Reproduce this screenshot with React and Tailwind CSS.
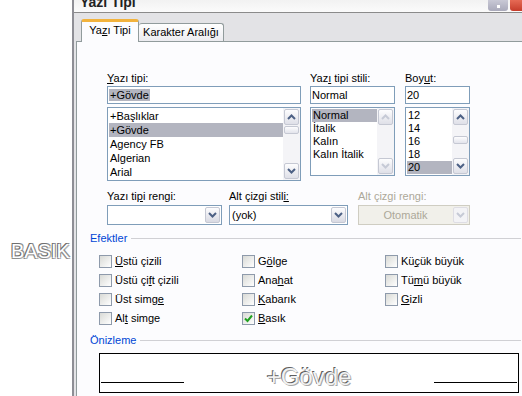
import React from 'react';

const FONTS = [
  '+Başlıklar',
  '+Gövde',
  'Agency FB',
  'Algerian',
  'Arial',
];
const STYLES = ['Normal', 'İtalik', 'Kalın', 'Kalın İtalik'];
const SIZES = ['12', '14', '16', '18', '20'];

function U({ children }) {
  return <span className="underline underline-offset-[1px]">{children}</span>;
}

function Arrow({ dir, disabled }) {
  return (
    <svg width="9" height="6" viewBox="0 0 9 6">
      <path
        d={dir === 'up' ? 'M1 5 L4.5 1.5 L8 5' : 'M1 1 L4.5 4.5 L8 1'}
        fill="none"
        stroke={disabled ? '#c6cad6' : '#4d6185'}
        strokeWidth="2"
      />
    </svg>
  );
}

function SbButton({ dir, disabled }) {
  return (
    <div className="h-[16px] shrink-0 flex items-center justify-center rounded-[2px] border border-[#c5c8d3] bg-linear-to-b from-[#fdfdfe] to-[#dfe0e8]">
      <Arrow dir={dir} disabled={disabled} />
    </div>
  );
}

function ScrollBar({ thumb, disabled }) {
  return (
    <div className="w-[17px] shrink-0 flex flex-col p-px bg-[#f4f4f7]">
      <SbButton dir="up" disabled={disabled} />
      <div className="flex-1">
        {thumb !== undefined && (
          <div
            className="h-[8px] rounded-[2px] border border-[#c5c8d3] bg-linear-to-b from-[#fdfdfe] to-[#e3e4ec]"
            style={{ marginTop: thumb }}
          />
        )}
      </div>
      <SbButton dir="down" disabled={disabled} />
    </div>
  );
}

function ListBox({ items, selected, rowH, height, thumb, disabled }) {
  return (
    <div
      className="mt-[3px] flex border border-[#7f9db9] bg-white"
      style={{ height }}
    >
      <div className="flex-1 pt-px pl-px">
        {items.map((it) => (
          <div
            key={it}
            className={it === selected ? 'pl-px bg-[#b3b5c0] whitespace-nowrap' : 'pl-px whitespace-nowrap'}
            style={{ height: rowH, lineHeight: rowH + 'px' }}
          >
            {it}
          </div>
        ))}
      </div>
      <ScrollBar thumb={thumb} disabled={disabled} />
    </div>
  );
}

function Field({ children }) {
  return (
    <div className="mt-px h-[18px] border border-[#7f9db9] bg-white pl-px leading-[16px] whitespace-nowrap">
      {children}
    </div>
  );
}

function Combo({ text, disabled }) {
  return (
    <div
      className={
        disabled
          ? 'mt-[2px] h-[20px] flex border border-[#cfcdc2] bg-[#f1f0ea]'
          : 'mt-[2px] h-[20px] flex border border-[#7f9db9] bg-white'
      }
    >
      <div
        className={
          disabled
            ? 'flex-1 text-center text-[#aca899] leading-[18px]'
            : 'flex-1 pl-[2px] leading-[18px]'
        }
      >
        {text}
      </div>
      <div
        className={
          disabled
            ? 'w-[15px] m-px flex items-center justify-center rounded-[2px] border border-[#dedde4] bg-[#f3f3f6]'
            : 'w-[15px] m-px flex items-center justify-center rounded-[2px] border border-[#c5c8d3] bg-linear-to-b from-[#fdfdfe] to-[#d9dae3]'
        }
      >
        <Arrow dir="down" disabled={disabled} />
      </div>
    </div>
  );
}

function GroupLabel({ children }) {
  return (
    <div className="flex items-center pl-[13px] h-[13px]">
      <span className="text-[#0046d5]">{children}</span>
      <div className="flex-1 h-px ml-[4px] mr-px bg-[#d0d0d4]" />
    </div>
  );
}

function Check({ checked, children }) {
  return (
    <div className="flex items-center h-[19px]">
      <div className="w-[13px] h-[13px] shrink-0 flex items-center justify-center border border-[#8e9aab] bg-linear-to-br from-[#d9dad6] to-white">
        {checked && (
          <svg width="9" height="9" viewBox="0 0 9 9">
            <path d="M1 4.5 L3.5 7 L8 1.5" fill="none" stroke="#21a121" strokeWidth="2" />
          </svg>
        )}
      </div>
      <span className="ml-[3px] whitespace-nowrap">{children}</span>
    </div>
  );
}

export default function App() {
  return (
    <div className="flex w-[522px] h-[396px] overflow-hidden bg-white text-black text-[11px] leading-[13px] font-['Liberation_Sans',Arial,sans-serif]">
      {/* text lying outside the dialog */}
      <div className="w-[72px] shrink-0 pt-[241px] pl-[11px]">
        <span className="text-[20px] leading-[20px] text-white [text-shadow:-1px_-1px_0_#6f6f6f,1px_-1px_0_#8f8f8f,-1px_1px_0_#8f8f8f,1px_1px_0_#b5b5b5]">
          BASIK
        </span>
      </div>

      {/* dialog */}
      <div className="flex-1 flex flex-col border-l-2 border-[#8e8e95] min-w-0">
        {/* title bar */}
        <div className="h-[13px] shrink-0 flex border-b border-[#8b8b8b] bg-linear-to-b from-[#f2f2f2] to-[#fbfbfb] overflow-hidden">
          <span className="pl-[6px] mt-[-5px] text-[14px] leading-[14px] font-bold text-[#222]">Yazı Tipi</span>
          <div className="ml-auto flex gap-[2px]">
            <div className="w-[20px] h-[11px] rounded-b-[3px] bg-linear-to-b from-[#c9c9d6] to-[#a9a9ba] flex items-end justify-center pb-[3px]">
              <div className="w-[3px] h-[3px] bg-white" />
            </div>
            <div className="w-[12px] h-[11px] rounded-bl-[3px] bg-linear-to-b from-[#e66a55] to-[#c63b2a]" />
          </div>
        </div>

        {/* body */}
        <div className="flex-1 flex flex-col bg-[#e3e3e6]">
          {/* tabs */}
          <div className="h-[28px] shrink-0 flex items-end pl-[7px]">
            <div className="relative z-10 -mb-px w-[58px] h-[23px] rounded-t-[3px] border-t-[3px] border-x border-t-[#f2b33d] border-x-[#919b9c] bg-[#fcfcfe] text-center leading-[17px]">
              Ya<U>z</U>ı Tipi
            </div>
            <div className="w-[85px] h-[18px] rounded-t-[3px] border-t border-r border-[#919b9c] bg-linear-to-b from-white to-[#ececf0] text-center leading-[16px]">
              Karakter Aralığı
            </div>
          </div>

          {/* panel */}
          <div className="flex-1 ml-[2px] border-l border-t border-[#919b9c] bg-[#fcfcfe] pt-[30px]">
            <div className="flex pl-[30px]">
              <div className="w-[194px]">
                <div><U>Y</U>azı tipi:</div>
                <Field>
                  <span className="bg-[#b3b5c0] px-px">+Gövde</span>
                </Field>
                <ListBox items={FONTS} selected="+Gövde" rowH={14} height={74} thumb={1} />
              </div>
              <div className="w-[85px] ml-[9px]">
                <div>Yaz<U>ı</U> tipi stili:</div>
                <Field>Normal</Field>
                <ListBox items={STYLES} selected="Normal" rowH={13} height={69} disabled />
              </div>
              <div className="w-[65px] ml-[10px]">
                <div>Boy<U>u</U>t:</div>
                <Field>20</Field>
                <ListBox items={SIZES} selected="20" rowH={13} height={69} thumb={11} />
              </div>
            </div>

            <div className="flex pl-[30px] mt-[9px]">
              <div className="w-[115px]">
                <div>Yazı ti<U>p</U>i rengi:</div>
                <Combo text="" />
              </div>
              <div className="w-[119px] ml-[7px]">
                <div>Alt çizgi stil<U>i:</U></div>
                <Combo text="(yok)" />
              </div>
              <div className="w-[112px] ml-[10px]">
                <div className="text-[#aca899]">Alt çizgi rengi:</div>
                <Combo text="Otomatik" disabled />
              </div>
            </div>

            <div className="mt-[7px]">
              <GroupLabel>Efektler</GroupLabel>
            </div>
            <div className="mt-[7px] pl-[22px] grid grid-cols-[143px_143px_143px]">
              <Check><U>Ü</U>stü çizili</Check>
              <Check>G<U>ö</U>lge</Check>
              <Check>Kü<U>ç</U>ük büyük</Check>
              <Check>Üstü çi<U>f</U>t çizili</Check>
              <Check>Ana<U>h</U>at</Check>
              <Check>Tü<U>m</U>ü büyük</Check>
              <Check>Üst simg<U>e</U></Check>
              <Check><U>K</U>abarık</Check>
              <Check><U>G</U>izli</Check>
              <Check>Al<U>t</U> simge</Check>
              <Check checked><U>B</U>asık</Check>
            </div>

            <div className="mt-[6px]">
              <GroupLabel>Önizleme</GroupLabel>
            </div>
            <div className="mt-[6px] ml-[22px] w-[420px] h-[40px] border border-black bg-white px-px grid grid-cols-[83px_1fr_83px]">
              <div className="self-end mb-[9px] h-px bg-black" />
              <div className="pt-[10px] text-center text-[24px] leading-[26px] text-[#f2f2f2] [text-shadow:-1px_-1px_0_#5e5e5e,1px_1px_0_#a8a8a8]">
                +Gövde
              </div>
              <div className="self-end mb-[9px] h-px bg-black" />
            </div>
          </div>
        </div>
      </div>
    </div>
  );
}
